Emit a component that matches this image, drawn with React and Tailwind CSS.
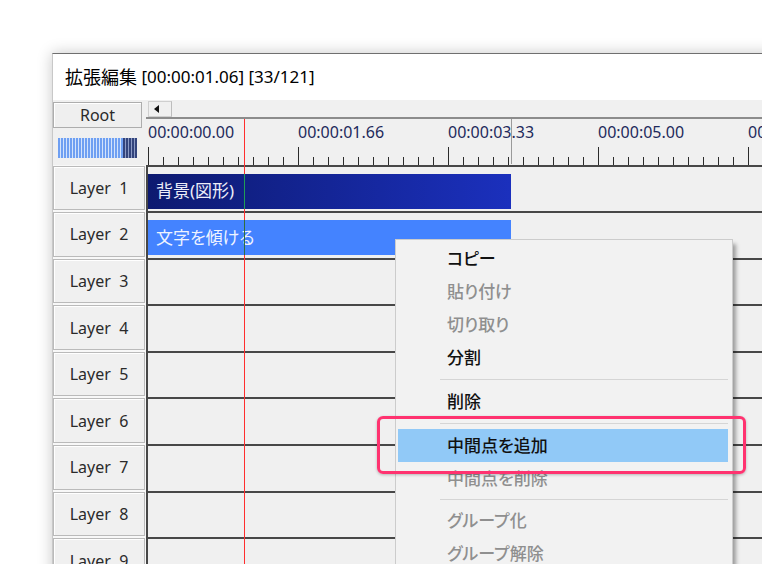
import React from "react";

const FONT = "font-['Noto_Sans','Noto_Sans_CJK_JP',sans-serif]";

function Ticks() {
  const ticks = [];
  for (let k = 0; k < 42; k++) {
    const x = 2 + 15 * k + 0.5;
    const major = k % 10 === 0;
    ticks.push(
      <line key={k} x1={x} x2={x} y1={major ? 0 : 10} y2={18} stroke="#2b2b2b" strokeWidth="1" />
    );
  }
  return (
    <svg width="616" height="18" className="block">
      {ticks}
    </svg>
  );
}

function LayerRow({ n, children }) {
  return (
    <div className="flex h-[46.6px] shrink-0">
      <div className="w-[93px] shrink-0 bg-[#f8f8f8] py-[1px] pr-[1px]">
        <div className="h-full border border-[#bababa] bg-[#f0f0f0] shadow-[inset_1px_1px_0_#ffffff] flex items-center justify-center text-[16px] text-[#2a2a2a] whitespace-pre">
          {"Layer  " + n}
        </div>
      </div>
      <div className="flex-1 border-t-2 border-l-2 border-[#474747] bg-[#f0f0f0] pt-[7px]">
        {children}
      </div>
    </div>
  );
}

function MenuItem({ label, disabled, active }) {
  return (
    <div
      className={
        "h-[33px] flex items-center pl-[49px] text-[17px] font-medium [font-feature-settings:'palt'] " +
        (active ? "bg-[#91c9f7] " : "") +
        (disabled ? "text-[#8f8f8f]" : "text-[#111111]")
      }
    >
      {label}
    </div>
  );
}

function Sep({ h }) {
  return (
    <div className={"flex items-center ml-[42px] " + h}>
      <div className="h-px w-full bg-[#d5d5d5]" />
    </div>
  );
}

export default function App() {
  const labels = ["00:00:00.00", "00:00:01.66", "00:00:03.33", "00:00:05.00", "00:00:06.66"];
  return (
    <div className={"w-[762px] h-[564px] overflow-hidden bg-white pt-[53px] pl-[52px] " + FONT}>
      <div className="w-[800px] h-[620px] flex flex-col border-t border-t-[#6f6f6f] border-l border-l-[#c8c8c8] shadow-[0_0_14px_rgba(0,0,0,0.22)]">
        {/* title bar */}
        <div className="h-[46px] shrink-0 bg-white flex items-center pl-[12px] text-[17px] text-black whitespace-pre">
          <span className="text-[18px] [font-feature-settings:'palt']">拡張編集</span>
          <span> [00:00:01.06] [33/121]</span>
        </div>

        {/* client */}
        <div className="relative flex-1 bg-[#f0f0f0] flex flex-col">
          {/* header */}
          <div className="flex h-[64.5px] shrink-0">
            <div className="w-[93px] shrink-0 pt-[2px]">
              <div className="w-[89px] h-[26px] border border-[#adadad] bg-[#efefef] shadow-[inset_1px_1px_0_#ffffff] flex items-center justify-center text-[16px] text-[#2a2a2a]">
                Root
              </div>
              <div className="mt-[10px] ml-[5px] w-[79px] h-[20px] flex">
                <div className="w-[65px] bg-[repeating-linear-gradient(90deg,#6e9ff2_0px,#6e9ff2_2px,#d3e3fb_2px,#d3e3fb_3px)]" />
                <div className="w-[14px] bg-[repeating-linear-gradient(90deg,#33447c_0px,#33447c_2px,#8c9bc5_2px,#8c9bc5_3px)]" />
              </div>
            </div>
            <div className="flex-1 flex flex-col">
              <div className="h-[17px] flex items-end pl-[2px]">
                <div className="w-[24px] h-[16px] border border-[#cfcfcf] border-r-[#bdbdbd] bg-[#f0f0f0] flex items-center pl-[5px]">
                  <svg width="5" height="8" viewBox="0 0 5 8">
                    <polygon points="5,0 0,4 5,8" fill="#111" />
                  </svg>
                </div>
              </div>
              <div className="h-[2px] bg-[#8c8c8c]" />
              <div className="flex-1 flex flex-col justify-between">
                <div className="flex pl-[2px] pt-[2px] text-[16px] leading-[22px] text-[#1e2a5c]">
                  {labels.map((l) => (
                    <div key={l} className="w-[150px] shrink-0 whitespace-nowrap">
                      {l}
                    </div>
                  ))}
                </div>
                <Ticks />
              </div>
            </div>
          </div>

          {/* cursor & scene end marker */}
          <div className="absolute left-[458px] top-[19px] h-[45px] w-px bg-[#9a9a9a]" />
          <div className="absolute left-[191px] top-[19px] bottom-0 w-px bg-[#ff2e2e]" />

          {/* layers */}
          <LayerRow n={1}>
            <div className="relative w-[363px] h-[35px] flex items-center pl-[8px] bg-[linear-gradient(90deg,#0d1a70,#1b30bd)] text-[17px] text-[#ecedf8] [font-feature-settings:'palt']">
              背景(図形)
              <div className="absolute left-[96px] top-0 bottom-0 w-px bg-[#1f9d55]" />
            </div>
          </LayerRow>
          <LayerRow n={2}>
            <div className="relative w-[363px] h-[35px] flex items-center pl-[8px] bg-[#4483ff] text-[17px] text-[#eef3ff] [font-feature-settings:'palt']">
              文字を傾ける
              <div className="absolute left-[96px] top-0 bottom-0 w-px bg-[#2f6f3f]" />
            </div>
          </LayerRow>
          {[3, 4, 5, 6, 7, 8, 9].map((n) => (
            <LayerRow key={n} n={n} />
          ))}

          {/* context menu */}
          <div className="absolute left-[342px] top-[139px] w-[338px] border border-[#cccccc] bg-[#f2f2f2] pt-[2px] pl-[2px] pr-[4px] pb-[4px] shadow-[4px_4px_4px_-1px_rgba(0,0,0,0.35)]">
            <MenuItem label="コピー" />
            <MenuItem label="貼り付け" disabled />
            <MenuItem label="切り取り" disabled />
            <MenuItem label="分割" />
            <Sep h="h-[11px]" />
            <MenuItem label="削除" />
            <Sep h="h-[11px]" />
            <MenuItem label="中間点を追加" active />
            <MenuItem label="中間点を削除" disabled />
            <Sep h="h-[9px]" />
            <MenuItem label="グループ化" disabled />
            <MenuItem label="グループ解除" disabled />
          </div>

          {/* annotation */}
          <div className="absolute left-[324px] top-[316px] w-[369px] h-[58px] rounded-[6px] border-[3px] border-[#ff3370] shadow-[0_1px_3px_rgba(0,0,0,0.25)]" />
        </div>
      </div>
    </div>
  );
}
